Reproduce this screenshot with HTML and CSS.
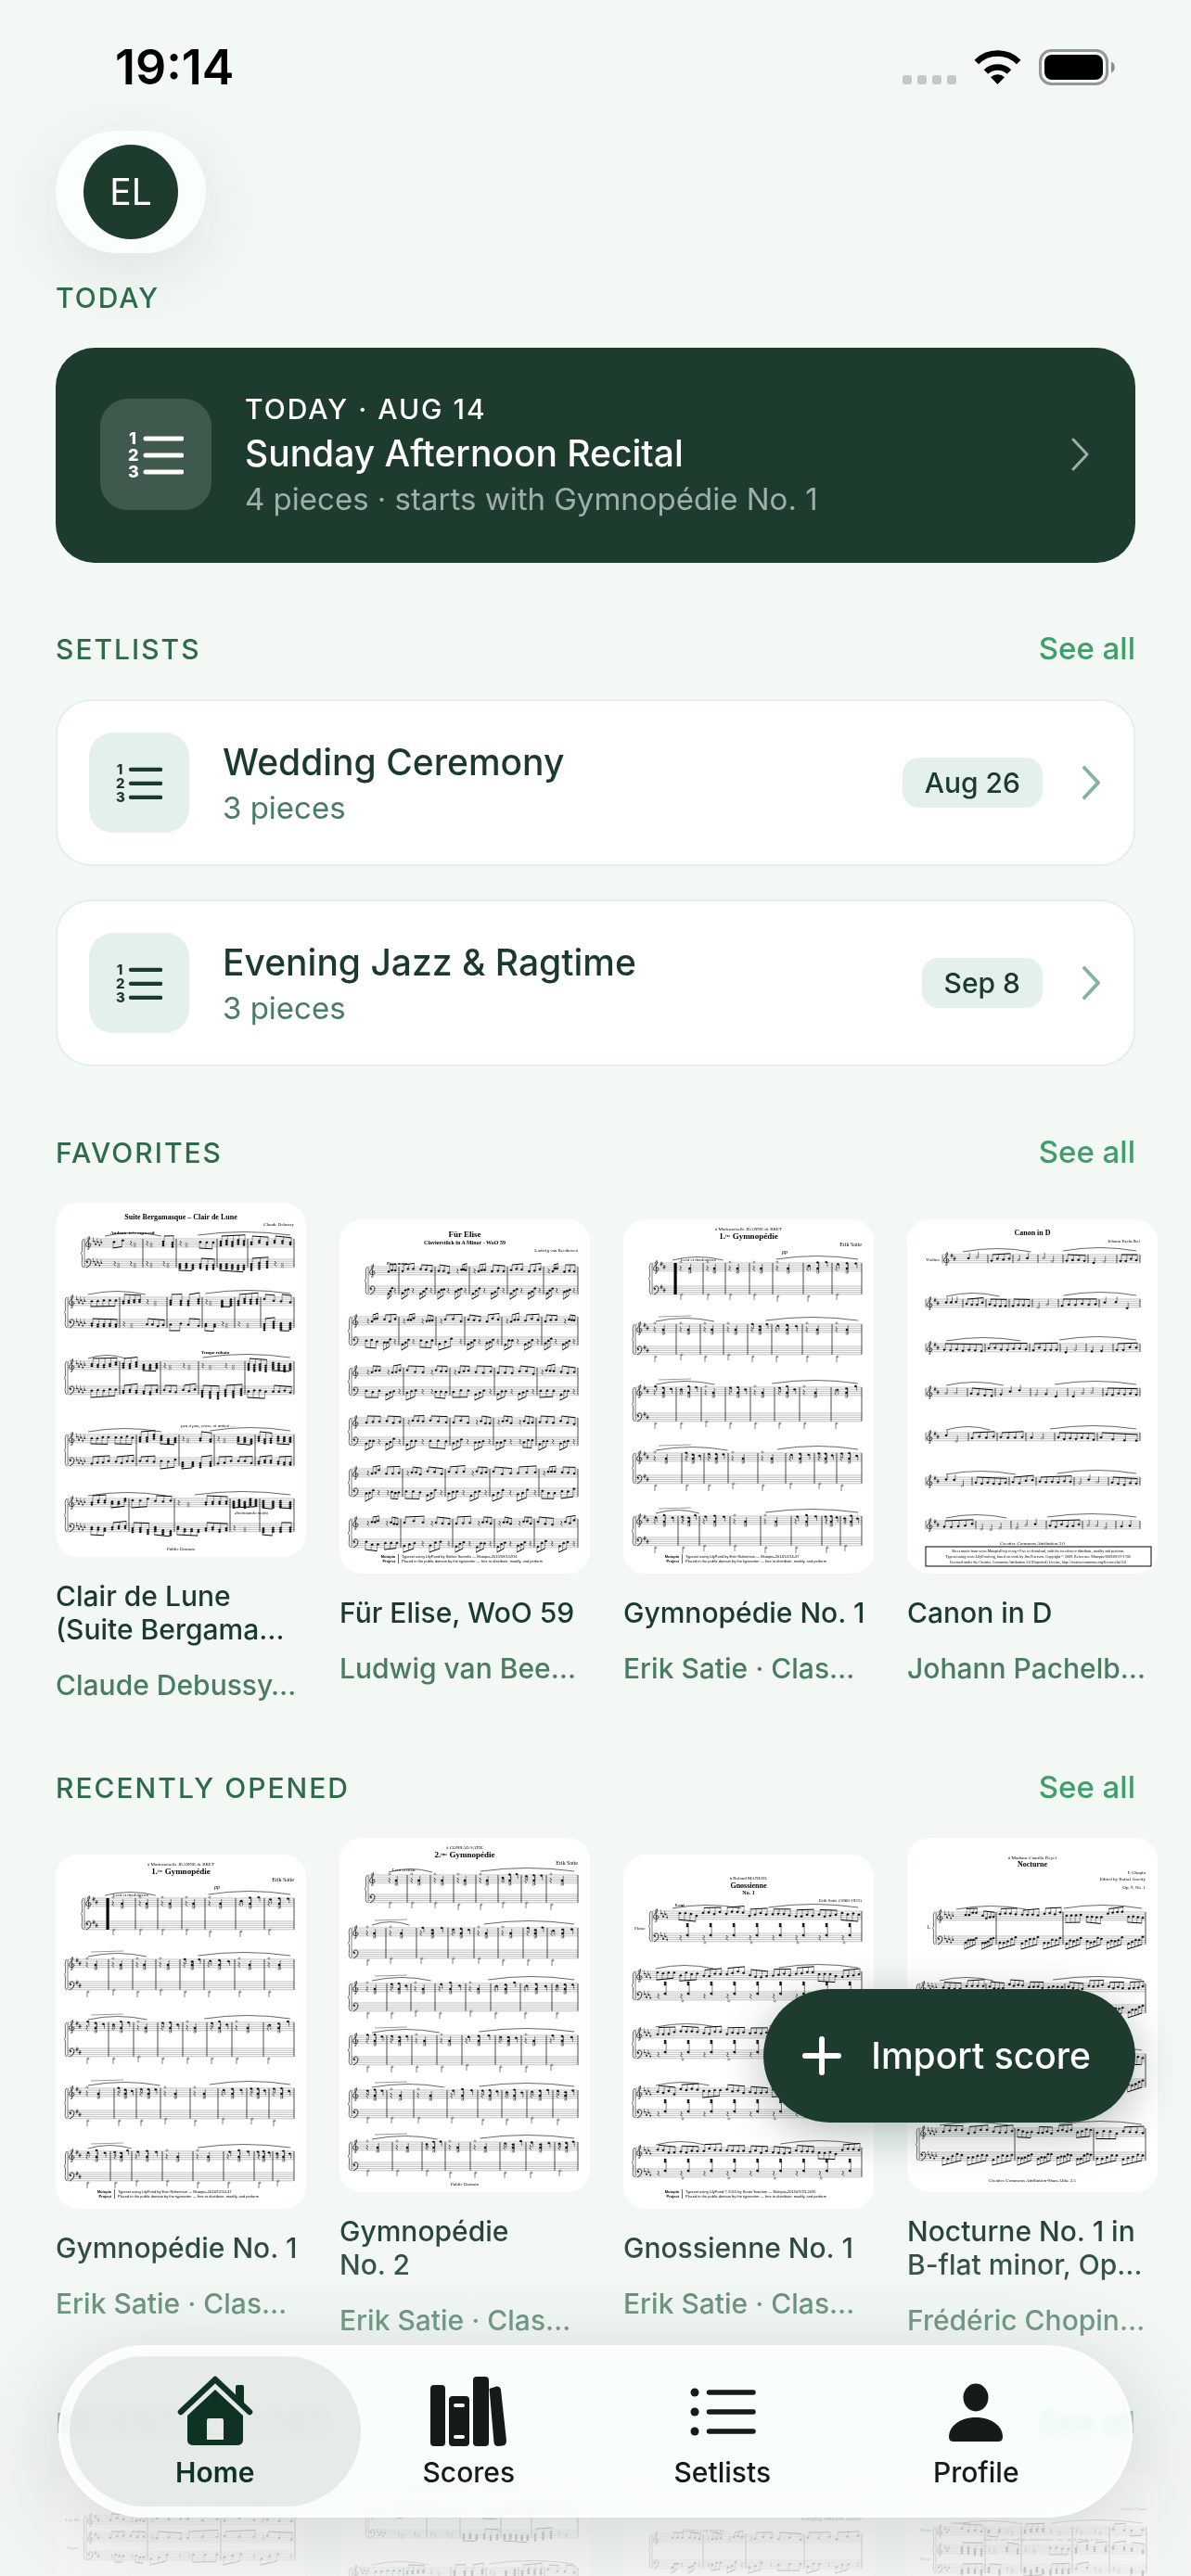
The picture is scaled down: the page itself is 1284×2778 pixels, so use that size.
FILE: index.html
```html
<!DOCTYPE html>
<html lang="en">
<head>
<meta charset="utf-8">
<meta name="viewport" content="width=device-width, initial-scale=1">
<title>Home</title>
<link rel="stylesheet" href="styles.css">
</head>
<body>
<div class="app">
  <div class="status">
    <span class="clock">19:14</span>
    <svg class="signals" viewBox="0 0 232 44" aria-label="Wi-Fi connected, battery full" role="img">
      <g fill="#c4c9c6"><rect x="1" y="30" width="10" height="10" rx="3"/><rect x="17" y="30" width="10" height="10" rx="3"/><rect x="33" y="30" width="10" height="10" rx="3"/><rect x="49" y="30" width="10" height="10" rx="3"/></g>
      <path d="M103.500 40l-7.500-7.800a11 11 0 0 1 15 0z"/>
      <path d="M91 26.500a18 18 0 0 1 25 0" fill="none" stroke="#000" stroke-width="6.500"/>
      <path d="M80.800 16a32 32 0 0 1 45.400 0" fill="none" stroke="#000" stroke-width="6.500"/>
      <rect x="149.500" y="3.500" width="72" height="36" rx="12" fill="none" stroke="#939795" stroke-width="3"/>
      <rect x="154" y="8" width="63" height="27" rx="8"/>
      <path d="M226 15.500c5 1.500 5 10.500 0 12z" fill="#8b8f8d"/>
    </svg>
  </div>

  <main class="content">
    <header class="top">
      <button class="account" type="button" aria-label="Account"><span class="avatar">EL</span></button>
    </header>

    <section class="block block-first">
      <div class="head"><h2>Today</h2></div>
      <a class="hero" href="#recital">
        <span class="tile"><svg class="numbered" viewBox="0 0 60 60" aria-hidden="true"><text x="1" y="19">1</text><text x="0" y="37">2</text><text x="0" y="55">3</text><path d="M19 13H58M19 31H58M19 49H58"/></svg></span>
        <span class="lines">
          <span class="over">TODAY · AUG 14</span>
          <span class="name">Sunday Afternoon Recital</span>
          <span class="meta">4 pieces · starts with Gymnopédie No. 1</span>
        </span>
        <svg class="chevron" viewBox="0 0 24 40" aria-hidden="true"><path d="M5 4L20 20L5 36"/></svg>
      </a>
    </section>

    <section class="block">
      <div class="head"><h2>Setlists</h2><a href="#setlists">See all</a></div>
      <div class="setlists">
        <a class="setlist" href="#wedding">
          <span class="tile"><svg class="numbered" viewBox="0 0 60 60" aria-hidden="true"><text x="1" y="19">1</text><text x="0" y="37">2</text><text x="0" y="55">3</text><path d="M19 13H58M19 31H58M19 49H58"/></svg></span>
          <span class="lines"><span class="name">Wedding Ceremony</span><span class="meta">3 pieces</span></span>
          <span class="date">Aug 26</span>
          <svg class="chevron" viewBox="0 0 24 40" aria-hidden="true"><path d="M5 4L20 20L5 36"/></svg>
        </a>
        <a class="setlist" href="#jazz">
          <span class="tile"><svg class="numbered" viewBox="0 0 60 60" aria-hidden="true"><text x="1" y="19">1</text><text x="0" y="37">2</text><text x="0" y="55">3</text><path d="M19 13H58M19 31H58M19 49H58"/></svg></span>
          <span class="lines"><span class="name">Evening Jazz &amp; Ragtime</span><span class="meta">3 pieces</span></span>
          <span class="date">Sep 8</span>
          <svg class="chevron" viewBox="0 0 24 40" aria-hidden="true"><path d="M5 4L20 20L5 36"/></svg>
        </a>
      </div>
    </section>

    <section class="block">
      <div class="head"><h2>Favorites</h2><a href="#favorites">See all</a></div>
      <div class="shelf">
        <a class="score" href="#clair"><svg class="sheet" data-score="clair" viewBox="0 0 270 382"></svg><span class="title">Clair de Lune<br>(Suite Bergama…</span><span class="by">Claude Debussy…</span></a>
        <a class="score" href="#elise"><svg class="sheet" data-score="elise" viewBox="0 0 270 382"></svg><span class="title">Für Elise, WoO 59</span><span class="by">Ludwig van Bee…</span></a>
        <a class="score" href="#gymno1"><svg class="sheet" data-score="gymno1" viewBox="0 0 270 382"></svg><span class="title">Gymnopédie No. 1</span><span class="by">Erik Satie · Clas…</span></a>
        <a class="score" href="#canon"><svg class="sheet" data-score="canon" viewBox="0 0 270 382"></svg><span class="title">Canon in D</span><span class="by">Johann Pachelb…</span></a>
      </div>
    </section>

    <section class="block">
      <div class="head"><h2>Recently opened</h2><a href="#opened">See all</a></div>
      <div class="shelf">
        <a class="score" href="#gymno1"><svg class="sheet" data-score="gymno1" viewBox="0 0 270 382"></svg><span class="title">Gymnopédie No. 1</span><span class="by">Erik Satie · Clas…</span></a>
        <a class="score" href="#gymno2"><svg class="sheet" data-score="gymno2" viewBox="0 0 270 382"></svg><span class="title">Gymnopédie<br>No. 2</span><span class="by">Erik Satie · Clas…</span></a>
        <a class="score" href="#gnossienne"><svg class="sheet" data-score="gnossienne" viewBox="0 0 270 382"></svg><span class="title">Gnossienne No. 1</span><span class="by">Erik Satie · Clas…</span></a>
        <a class="score" href="#nocturne"><svg class="sheet" data-score="nocturne" viewBox="0 0 270 382"></svg><span class="title">Nocturne No. 1 in<br>B-flat minor, Op…</span><span class="by">Frédéric Chopin…</span></a>
      </div>
    </section>

    <section class="block">
      <div class="head"><h2>Recently added</h2><a href="#added">See all</a></div>
      <div class="shelf">
        <a class="score" href="#trumpet" aria-label="Trumpet and organ score"><svg class="sheet" data-score="trumpet" viewBox="0 0 270 382"></svg></a>
        <a class="score" href="#clair" aria-label="Clair de Lune"><svg class="sheet" data-score="clair" viewBox="0 0 270 382"></svg></a>
        <a class="score" href="#mozart" aria-label="Mozart sonata"><svg class="sheet" data-score="mozart" viewBox="0 0 270 382"></svg></a>
        <a class="score" href="#faure" aria-label="Fauré song"><svg class="sheet" data-score="faure" viewBox="0 0 270 382"></svg></a>
      </div>
    </section>
  </main>

  <div class="fade"></div>

  <button class="import" type="button">
    <svg viewBox="0 0 42 42" aria-hidden="true"><path d="M21 3V39M3 21H39" stroke="currentColor" stroke-width="6" stroke-linecap="round"/></svg>
    Import score
  </button>

  <nav class="tabs" aria-label="Main">
    <a class="tab current" href="#home" aria-current="page">
      <svg viewBox="0 0 84 78" aria-hidden="true">
        <path d="M5 41L42 6L79 41" fill="none" stroke="currentColor" stroke-width="6.500" stroke-linecap="round" stroke-linejoin="round"/>
        <path d="M64 28V14q0-2 2-2h5q2 0 2 2V36z" fill="currentColor"/>
        <path fill-rule="evenodd" d="M42 17L72 45V71q0 6-7 6H19q-7 0-7-6V45zM35 48q-2 0-2 2V71H51V50q0-2-2-2z" fill="currentColor"/>
      </svg>
      Home
    </a>
    <a class="tab" href="#scores">
      <svg viewBox="0 0 84 78" aria-hidden="true" fill="currentColor">
        <rect x="1" y="12" width="16" height="66" rx="4"/>
        <path fill-rule="evenodd" d="M25 24H39q4 0 4 4V74q0 4-4 4H25q-4 0-4-4V28q0-4 4-4zM28 32a2 2 0 0 0 0 4H36a2 2 0 0 0 0-4zM28 66a2 2 0 0 0 0 4H36a2 2 0 0 0 0-4z"/>
        <rect x="47" y="3" width="17" height="75" rx="4"/>
        <path d="M64.500 16l8-2.500q4 0 4.500 4L83 72q0 5-4 5.500l-5 .500q-4 0-4.500-4z"/>
      </svg>
      Scores
    </a>
    <a class="tab" href="#setlists">
      <svg viewBox="0 0 84 78" aria-hidden="true">
        <g fill="currentColor"><circle cx="12" cy="20" r="4.500"/><circle cx="12" cy="41" r="4.500"/><circle cx="12" cy="62" r="4.500"/></g>
        <path d="M27.500 20H75M27.500 41H75M27.500 62H75" stroke="currentColor" stroke-width="5.500" stroke-linecap="round"/>
      </svg>
      Setlists
    </a>
    <a class="tab" href="#profile">
      <svg viewBox="0 0 84 78" aria-hidden="true" fill="currentColor">
        <ellipse cx="42" cy="25.500" rx="13.500" ry="15"/>
        <path d="M42 47C60 47 71 57 71 68q0 5-5 5H18q-5 0-5-5C13 57 24 47 42 47z"/>
      </svg>
      Profile
    </a>
  </nav>
</div>
<script src="scores.js"></script>
</body>
</html>
```
FILE: styles.css
```css
:root {
  --paper: #f3f8f5;
  --forest: #1e3c2e;
  --ink: #1b3a2d;
  --moss: #2e6b4a;
  --sage: #4a7c63;
  --leaf: #3f9f6b;
  --mint: #e4f0ea;
}

* { box-sizing: border-box; }

body {
  margin: 0;
  background: var(--paper);
  color: var(--ink);
  font-family: Inter, "Liberation Sans", sans-serif;
  font-size: 33px;
  line-height: 44px;
}

a { color: inherit; text-decoration: none; }
button { border: 0; font: inherit; cursor: pointer; }

.app {
  position: relative;
  display: flex;
  flex-direction: column;
  height: 100vh;
  overflow: hidden;
}

/* Status bar */
.status {
  display: flex;
  align-items: center;
  justify-content: space-between;
  padding: 43px 80px 38px 124px;
  color: #000;
}
.clock { font-size: 52px; line-height: 60px; font-weight: 600; }
.signals { width: 232px; height: 44px; }

/* Scrolling content */
.content {
  flex: 1;
  min-height: 0;
  overflow-y: auto;
  scrollbar-width: none;
  margin-top: -141px;
  padding-top: 141px;
}
.top { display: flex; padding: 0 60px; }
.account {
  padding: 15px 30px;
  border-radius: 66px;
  background: #fbfffc;
  box-shadow: 0 20px 80px rgba(30, 60, 46, 0.1);
}
.avatar {
  display: grid;
  place-items: center;
  width: 102px;
  height: 102px;
  border-radius: 50%;
  background: var(--forest);
  color: #fff;
  font-size: 39px;
}

.block { padding-top: 70px; }
.block-first { padding-top: 26px; }
.head {
  display: flex;
  align-items: baseline;
  justify-content: space-between;
  padding: 0 60px;
  margin-bottom: 32px;
}
.head h2, .head a { line-height: 44px; font-weight: 500; }
.head h2 {
  margin: 0;
  color: var(--moss);
  font-size: 30px;
  letter-spacing: 2px;
  text-transform: uppercase;
}
.head a { color: var(--leaf); }

.tile { display: grid; place-items: center; flex: none; }
.numbered { font-size: 18px; font-weight: 800; fill: currentColor; }
.numbered path { stroke: currentColor; stroke-width: 5; stroke-linecap: round; }
.lines { display: flex; flex-direction: column; flex: 1; min-width: 0; }
.over { font-size: 30px; line-height: 42px; font-weight: 500; letter-spacing: 2px; }
.name { font-size: 39px; line-height: 54px; font-weight: 500; }
.meta { font-size: 33px; line-height: 44px; }
.chevron {
  flex: none;
  width: 24px;
  height: 40px;
  fill: none;
  stroke: currentColor;
  stroke-width: 3;
  stroke-linecap: round;
  stroke-linejoin: round;
}

/* Next setlist */
.hero {
  display: flex;
  align-items: center;
  gap: 36px;
  margin: 0 60px;
  padding: 45px 48px 47px;
  border-radius: 42px;
  background: var(--forest);
  color: #fff;
}
.hero .tile { width: 120px; height: 120px; border-radius: 30px; background: rgba(255, 255, 255, 0.15); }
.hero .numbered { width: 60px; height: 60px; }
.hero .meta, .hero .chevron { color: #a0afa7; }

/* Setlist rows */
.setlists { display: flex; flex-direction: column; gap: 36px; padding: 0 60px; }
.setlist {
  display: flex;
  align-items: center;
  gap: 36px;
  padding: 34px;
  border: 2px solid #e4f0ea;
  border-radius: 38px;
  background: #fff;
}
.setlist .tile { width: 108px; height: 108px; border-radius: 26px; background: var(--mint); }
.setlist .numbered { width: 50px; height: 50px; }
.setlist .meta { color: var(--sage); }
.setlist .chevron { color: #86b39c; stroke-width: 4; }
.date {
  margin-right: 4px;
  padding: 6px 24px;
  border-radius: 18px;
  background: var(--mint);
  font-size: 30px;
  line-height: 42px;
  font-weight: 500;
}

/* Score shelves */
.shelf {
  display: flex;
  align-items: center;
  gap: 36px;
  padding: 0 36px 0 60px;
  overflow-x: auto;
  scrollbar-width: none;
}
.score { display: flex; flex-direction: column; gap: 24px; flex: none; width: 270px; }
.sheet { width: 270px; height: 382px; border-radius: 24px; background: #fff; }
.title, .by { font-size: 30px; line-height: 36px; font-weight: 500; white-space: nowrap; }
.by { color: var(--sage); }

/* Floating controls */
.fade {
  position: absolute;
  inset: auto 0 0;
  height: 400px;
  pointer-events: none;
  background: linear-gradient(rgba(243, 248, 245, 0), rgba(240, 244, 242, 0.28) 35%, rgba(240, 243, 241, 0.8) 82%);
}
.import {
  position: absolute;
  right: 60px;
  bottom: 489px;
  display: flex;
  align-items: center;
  gap: 32px;
  padding: 45px 48px 45px 42px;
  border-radius: 72px;
  background: var(--forest);
  color: #fff;
  font-size: 39px;
  line-height: 54px;
  font-weight: 500;
  box-shadow: 0 12px 48px rgba(30, 60, 46, 0.32);
}
.import svg { width: 42px; height: 42px; }

.tabs {
  position: absolute;
  left: 63px;
  right: 63px;
  bottom: 63px;
  display: grid;
  grid-template-columns: repeat(4, 1fr);
  padding: 0 29px;
  border: 3px solid #fff;
  border-radius: 93px;
  background: rgba(251, 255, 252, 0.8);
  backdrop-filter: blur(5px) saturate(2);
  box-shadow: 0 12px 90px rgba(40, 60, 50, 0.16);
}
.tab {
  position: relative;
  display: flex;
  flex-direction: column;
  align-items: center;
  gap: 6px;
  padding: 28px 0 24px;
  color: #171b18;
  font-size: 30px;
  line-height: 44px;
  font-weight: 500;
}
.tab svg { position: relative; width: 84px; height: 78px; }
.current { color: #0e3323; font-weight: 600; isolation: isolate; }
.current::before {
  content: "";
  position: absolute;
  z-index: -1;
  inset: 9px -20px;
  border-radius: 81px;
  background: rgba(214, 219, 216, 0.55);
}
```
FILE: scores.js
```js
// Draws the first page of each score as a 270 x 382 thumbnail.
// A system is [left, [staff tops], [bar lines]].
const ordinal = (n, suffix) => `${n}.<tspan dy="-2" font-size="4">${suffix}</tspan><tspan dy="2"> Gymnopédie</tspan>`;

const scores = {
  clair: {
    style: 'dense', key: 5, end: 257,
    text: [['m', 135, 18, 8, 'Suite Bergamasque – Clair de Lune', 'b'], ['e', 257, 25, 5, 'Claude Debussy'], ['s', 59, 34, 5, 'Andante très expressif', 'b'], ['s', 157, 163, 5, 'Tempo rubato', 'b'], ['s', 135, 242, 5, 'peu à peu, cresc. et animé . . .', 'i'], ['s', 193, 336, 5, 'diminuendo molto', 'i'], ['m', 135, 375, 5, 'Public Domain']],
    systems: [[31, [39, 61], [94, 130, 174, 207]], [13, [102, 126], [69, 120, 158, 193, 221]], [13, [171, 198], [69, 113, 154, 204]], [13, [250, 275], [87, 133, 171, 215]], [13, [319, 346], [79, 128, 188, 220]]]
  },
  elise: {
    style: 'run', key: 0, end: 257,
    text: [['m', 135, 19, 9, 'Für Elise', 'b'], ['m', 135, 27, 6, 'Clavierstück in A Minor - WoO 59', 'b'], ['e', 257, 35, 5, 'Ludwig van Beethoven'], ['s', 51, 49, 5, 'Poco moto.', 'b']],
    foot: 'Typeset using LilyPond by Stelios Samelis — Mutopia-2015/09/13-931',
    systems: [[31, [51, 72], [64, 103, 140, 181, 220]], [13, [105, 127], [64, 104, 135, 175, 218]], [13, [160, 181], [69, 119, 167, 213]], [13, [214, 235], [69, 119, 166, 212]], [13, [269, 290], [68, 114, 162, 215]], [13, [323, 345], [66, 122, 167, 210]]]
  },
  gymno1: {
    style: 'waltz', key: 2, end: 257, opening: true,
    text: [['m', 135, 12, 5, 'à Mademoiselle JEANNE de BRET'], ['m', 135, 21, 9, ordinal(1, 'ère'), 'b'], ['e', 257, 29, 6, 'Erik Satie'], ['s', 62, 45, 5, 'Lent et douloureux'], ['s', 171, 37, 6, 'pp', 'i']],
    foot: 'Typeset using LilyPond by Evin Robertson — Mutopia-2014/12/14-37',
    systems: [[31, [47, 72], [57, 86, 110, 136, 161, 194, 225]], [13, [113, 137], [57, 83, 108, 134, 160, 193, 225]], [13, [181, 209], [57, 84, 110, 137, 163, 190, 224]], [13, [252, 276], [63, 87, 113, 145, 175, 206, 230]], [13, [320, 343], [59, 82, 115, 148, 181, 214, 234]]]
  },
  canon: {
    style: 'solo', key: 2, end: 251,
    text: [['m', 135, 17, 8, 'Canon in D', 'b'], ['e', 251, 25, 5, 'Johann Pachelbel'], ['s', 20, 45, 5, 'Violino'], ['m', 135, 351, 5, 'Creative Commons Attribution 3.0'], ['m', 141, 359, 5, 'Sheet music from www.MutopiaProject.org  •  Free to download, with the freedom to distribute, modify and perform.', 'c'], ['m', 141, 365, 5, 'Typeset using www.LilyPond.org, based on work by Jim Peterson. Copyright © 2009. Reference: Mutopia-2009/09/07-1700', 'c'], ['m', 141, 371, 5, 'Licensed under the Creative Commons Attribution 3.0 (Unported) License, http://creativecommons.org/licenses/by/3.0', 'c']],
    box: [20, 353, 243, 21],
    systems: [[38, [38], [87, 114, 141, 168, 195, 226]], [20, [86], [60, 85, 110, 135, 163, 207]], [20, [134], [84, 132, 165, 193, 222]], [20, [182], [65, 95, 133, 173, 211]], [20, [230], [66, 97, 128, 159, 205]], [20, [278], [70, 110, 139, 180, 217]], [20, [325], [74, 112, 150, 189, 225]]]
  },
  gymno2: {
    style: 'waltz', key: 0, end: 257,
    text: [['m', 135, 12, 5, 'à CONRAD SATIE'], ['m', 135, 21, 9, ordinal(2, 'ème'), 'b'], ['e', 257, 29, 6, 'Erik Satie'], ['s', 57, 36, 5, 'Lent et triste'], ['m', 135, 375, 5, 'Public Domain']],
    systems: [[31, [40, 61], [73, 98, 123, 147, 171, 196, 223]], [13, [97, 121], [50, 83, 117, 145, 171, 198, 224]], [13, [157, 178], [51, 77, 103, 136, 163, 195, 229]], [13, [213, 236], [51, 78, 105, 132, 168, 196, 223]], [13, [272, 293], [51, 80, 116, 149, 175, 202, 230]], [13, [328, 350], [57, 89, 114, 141, 173, 201, 232]]]
  },
  gnossienne: {
    style: 'free', key: 4, end: 257,
    text: [['m', 135, 27, 5, 'à Roland MANUEL'], ['m', 135, 36, 8, 'Gnossienne', 'b'], ['m', 135, 43, 6, 'No. 1', 'b'], ['e', 257, 51, 5, 'Erik Satie (1866-1925)'], ['s', 56, 56, 5, 'Lent', 'b'], ['s', 12, 81, 5, 'Piano']],
    foot: 'Typeset using LilyPond © 2015 by Knute Snortum — Mutopia-2015/07/23-2035',
    systems: [[31, [61, 85], []], [13, [126, 148], []], [13, [189, 211], []], [13, [252, 275], []], [13, [316, 339], []]]
  },
  nocturne: {
    style: 'free', key: 5, end: 257,
    text: [['m', 135, 23, 5, 'à Madame Camilla Pleyel'], ['m', 135, 31, 8, 'Nocturne', 'b'], ['e', 257, 39, 5, 'F. Chopin'], ['e', 257, 46, 5, 'Edited by Rafael Joseffy'], ['e', 257, 55, 5, 'Op. 9, No. 1'], ['s', 21, 98, 6, '1.'], ['m', 135, 371, 5, 'Creative Commons Attribution-ShareAlike 2.5']],
    systems: [[31, [80, 106], [96, 168]], [13, [157, 180], [85, 170]], [13, [233, 260], [100, 190]], [13, [313, 339], [116, 201]]]
  },
  trumpet: {
    style: 'run', key: 2, end: 258,
    text: [['s', 10, 52, 5, 'Trpt Bb'], ['s', 12, 82, 5, 'Organ']],
    systems: [[33, [46, 65, 85], [99, 178]]]
  },
  mozart: {
    style: 'run', key: 0, end: 257,
    text: [['e', 257, 51, 6, 'Wolfgang Amadeus Mozart'], ['s', 63, 64, 6, 'Allegro con spirito.']],
    systems: [[31, [66, 94], [86, 132, 195]]]
  },
  faure: {
    style: 'dense', key: 3, end: 258,
    text: [['e', 258, 40, 5, 'Gabriel Fauré'], ['s', 46, 55, 5, 'Andantino'], ['s', 14, 63, 5, 'Chant'], ['s', 82, 73, 5, 'Dans un  som - meil  que  charmait ton i - ma  -  ge   Je rêvais le bon-'], ['s', 14, 94, 5, 'Piano']],
    systems: [[31, [58, 78, 99], [84, 123, 178, 218]]]
  }
};

function random(seed) {
  let s = seed;
  return () => (s = (s * 16807) % 2147483647) / 2147483647;
}

function draw(score, seed) {
  const r = random(seed);
  const out = [];
  const gap = 2.2;
  const line = (x1, y1, x2, y2, w) => out.push(`<path d="M${x1.toFixed(1)} ${y1.toFixed(1)}L${x2.toFixed(1)} ${y2.toFixed(1)}" stroke="#000" stroke-width="${w}"/>`);
  const head = (x, y, hollow) => out.push(`<ellipse cx="${x.toFixed(1)}" cy="${y.toFixed(1)}" rx="1.2" ry=".9" fill="${hollow ? '#fff' : '#000'}" stroke="#000" stroke-width=".4"/>`);
  const curve = (x1, x2, y, h) => out.push(`<path d="M${x1} ${y}Q${(x1 + x2) / 2} ${y - h} ${x2} ${y}" fill="none" stroke="#000" stroke-width=".6"/>`);
  const rest = (x, y) => out.push(`<path d="M${x} ${y}l1.500 2l-1.500 1.500l1.500 2" fill="none" stroke="#000" stroke-width=".7"/>`);

  const beamed = (x1, x2, y, n, up, chord, lean) => {
    const slope = lean === undefined ? (r() - 0.5) * 4 : lean;
    const by = up ? y - 6 : y + 7;
    for (let i = 0; i < n; i++) {
      const t = n > 1 ? i / (n - 1) : 0;
      const x = x1 + (x2 - x1) * t;
      const ny = y + slope * t + (r() - 0.5) * 3;
      for (let k = 0; k < chord; k++) head(x, ny + k * 2.1);
      line(x + (up ? 1.1 : -1.1), ny, x + (up ? 1.1 : -1.1), by + slope * t, 0.4);
    }
    line(x1 + (up ? 1 : -1.3), by, x2 + (up ? 1.3 : -1), by + slope, 1);
  };

  const measure = (x1, x2, y, lower) => {
    const w = x2 - x1;
    const style = score.style;
    if (style === 'waltz') {
      if (lower) {
        const ny = y + 9 + (r() > 0.5 ? 2 : 0);
        head(x1 + 6, ny, true);
        line(x1 + 5, ny, x1 + 5, ny + 6, 0.5);
        return;
      }
      rest(x1 + 4, y + 3);
      for (let k = 0; k < 3; k++) head(x1 + w * 0.5, y + 6 + k * 2.2, k > 0);
      line(x1 + w * 0.5 + 1.2, y + 1, x1 + w * 0.5 + 1.2, y + 11, 0.5);
      if (r() > 0.45) for (let k = 0; k < 3; k++) {
        const nx = x1 + w * (0.2 + k * 0.3), ny = y + r() * 4 - 1;
        head(nx, ny);
        line(nx + 1.2, ny, nx + 1.2, ny + 5, 0.5);
      } else head(x1 + 5, y - 1, true);
      return;
    }
    if (style === 'solo') {
      const n = Math.max(2, Math.round(w / (r() > 0.5 ? 7 : 13)));
      if (n > 3) { beamed(x1 + 4, x2 - 4, y + 6, n, true, 1); return; }
      for (let i = 0; i < n; i++) {
        const x = x1 + 6 + i * (w - 8) / n, ny = y + 2 + r() * 8;
        head(x, ny, r() > 0.5);
        line(x + 1.2, ny, x + 1.2, ny - 6, 0.5);
      }
      return;
    }
    if (style === 'free') {
      const n = Math.max(2, Math.round(w / 24));
      for (let i = 0; i < n; i++) {
        const a = x1 + i * w / n + 4, b = x1 + (i + 1) * w / n - 3;
        if (!lower) beamed(a, b, y + 2 + r() * 3, 4, r() > 0.2, 1);
        else if (score.key === 5) beamed(a, b, y + 7, 5, false, 1, -5);
        else {
          rest(a, y + 2);
          for (let k = 0; k < 2; k++) head(a + 8, y - 10 + k * 2.2);
          head(a + 8, y + 2);
          line(a + 9.1, y - 11, a + 9.1, y + 4, 0.5);
          if (i % 2) head(a + 2, y + 10, true);
        }
      }
      return;
    }
    const chord = style === 'dense' ? 1 + Math.floor(r() * 3.5) : 1;
    const half = w > 34 ? 2 : 1;
    for (let g = 0; g < half; g++) {
      const a = x1 + 4 + g * w / half, b = x1 + (g + 1) * w / half - 4;
      if (style === 'run') {
        if (lower && r() > 0.25) { beamed(a, a + (b - a) * 0.55, y + 7, 3, false, 1, -4); rest(b - 1, y + 2); }
        else if (r() > 0.5) { rest(a + 1, y + 2); beamed(a + 6, b, y + 4, 3, !lower, 1); }
        else beamed(a, b, y + 4, 3, !lower, 1);
      } else if (r() > 0.25) beamed(a, b, y + (lower ? 5 : 3), Math.max(2, Math.round((b - a) / 5)), r() > 0.35, chord);
      else { rest(a, y + 2); head((a + b) / 2, y + 5, true); head((a + b) / 2, y + 8, true); }
    }
  };

  score.systems.forEach(([left, staves, bars], si) => {
    const end = score.end;
    const last = staves[staves.length - 1] + gap * 4;
    staves.forEach((y, i) => {
      const lower = i > 0 && i === staves.length - 1;
      for (let k = 0; k < 5; k++) line(left, y + k * gap, end, y + k * gap, 0.25);
      out.push(lower
        ? `<path d="M${left + 2} ${y + 3}c0-4 5-4 5 0q0 4-5 6" fill="none" stroke="#000" stroke-width=".8"/><circle cx="${left + 3}" cy="${y + 3}" r=".9"/>`
        : `<path d="M${left + 3} ${y + 11}q2 1 2-1l-1.200-11q2-3 2 0q0 2-3 4.500q-3 4 1 5q4 0 3-3q-2-2-3 1" fill="none" stroke="#000" stroke-width=".7"/>`);
      for (let k = 0; k < score.key; k++) {
        const kx = left + 9.5 + k * (score.key > 2 ? 2.1 : 3), ky = y + 1.5 + (k % 2) * 3 + k * 0.4;
        line(kx, ky - 3, kx, ky + 2, 0.4);
        if (score.key > 2) out.push(`<circle cx="${kx + 0.6}" cy="${ky + 1}" r=".8"/>`);
        else { line(kx + 1.2, ky - 3, kx + 1.2, ky + 2, 0.4); line(kx - 0.8, ky, kx + 2, ky - 0.8, 0.9); }
      }
      const edges = [left + 12 + score.key * 2, ...bars, end];
      if (si === 0) edges[0] += 6;
      for (let b = 0; b < edges.length - 1; b++) if (edges[b + 1] - edges[b] > 9) measure(edges[b], edges[b + 1], y, lower);
    });
    line(left, staves[0], left, last, 0.5);
    if (staves.length > 1) {
      const top = staves[0], q = (last - top) / 4;
      out.push(`<path d="M${left - 1} ${top}q-2.500 2-1.500 ${q}q.500 ${q - 1}-1 ${q}q1.500 1 1 ${q}q-1 ${q - 1} 1.500 ${q}" fill="none" stroke="#000" stroke-width=".6"/>`);
    }
    bars.forEach(x => line(x, staves[0], x, last, 0.7));
    line(end, staves[0], end, last, 0.7);
    if (score.style !== 'run') {
      curve(left + 22, left + 60 + r() * 50, staves[0] - 3, 7);
      curve(150 + r() * 20, end - 4, staves[0] - 4, 7);
    }
    if (score.style === 'waltz' && si > 0) line(left + 25, staves[0] - 8, left + 60, staves[0] - 9, 0.4);
  });
  if (score.opening) line(56, 47, 56, 81, 3);

  const anchor = { s: 'start', m: 'middle', e: 'end' };
  score.text.forEach(([a, x, y, size, value, mode]) => {
    const px = mode === 'c' ? 4 : size;
    out.push(`<text x="${x}" y="${y}" font-family="Liberation Serif, serif" font-size="${px}" text-anchor="${anchor[a]}"${mode === 'b' ? ' font-weight="700"' : ''}${mode === 'i' ? ' font-style="italic"' : ''}>${value}</text>`);
  });
  if (score.box) out.push(`<rect x="${score.box[0]}" y="${score.box[1]}" width="${score.box[2]}" height="${score.box[3]}" fill="none" stroke="#000" stroke-width="1"/>`);
  if (score.foot) {
    out.push(`<g font-family="Liberation Sans, sans-serif" font-size="4"><text x="60" y="365" text-anchor="end" font-weight="700">Mutopia</text><text x="60" y="370" text-anchor="end" font-weight="700">Project</text><text x="67" y="365">${score.foot}</text><text x="67" y="370">Placed in the public domain by the typesetter — free to distribute, modify, and perform</text></g>`);
    line(63.5, 361, 63.5, 371, 0.6);
  }
  return out.join('');
}

document.querySelectorAll('[data-score]').forEach(el => {
  const id = el.dataset.score;
  el.innerHTML = draw(scores[id], 977 * id.length + id.charCodeAt(0) * 31);
});
```
